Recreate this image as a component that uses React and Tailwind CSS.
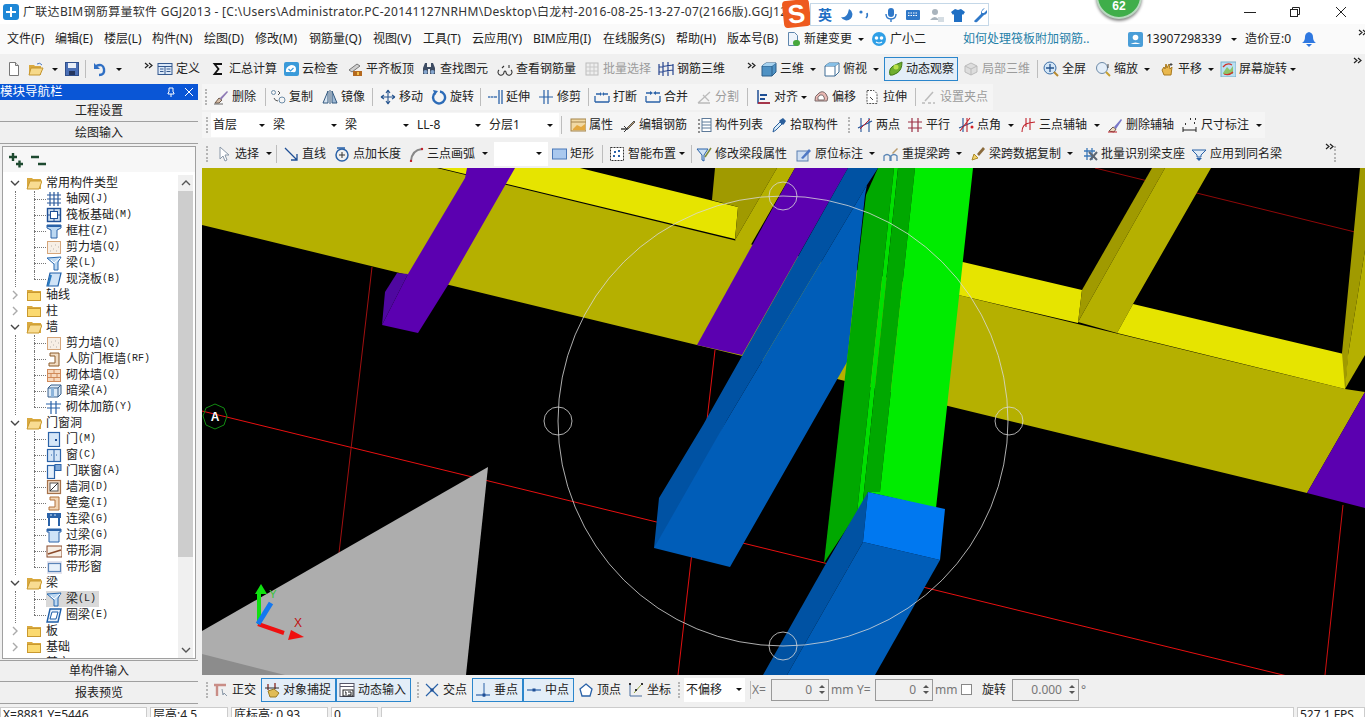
import clsx from 'clsx';

const L = (c, d, w = 1) => <path d={d} fill="none" stroke={c} strokeWidth={w} />;
const F = (c, d) => <path d={d} fill={c} />;

const icons = {
  doc: <><path d="M3.5 1.5h6l3 3v10h-9z" fill="#fff" stroke="#777" /><path d="M9.5 1.5v3h3" fill="#ddd" stroke="#777" /></>,
  open: <><path d="M1 4h5l1 1h6v9H1z" fill="#d9a93f" /><path d="M3 7h12l-3 7H1z" fill="#f6d98a" stroke="#c4952f" /><path d="M9 3q3-2 5 1" fill="none" stroke="#4a78c0" /></>,
  save: <><rect x="1.5" y="1.5" width="13" height="13" fill="#4a6fb5" stroke="#2f4f8c" /><rect x="4" y="2" width="8" height="5" fill="#e8eef8" /><rect x="5" y="10" width="6" height="4" fill="#24365f" /></>,
  undo: <>{L('#2f6fc4', 'M4 5q7-3 8 3t-5 6', 2.4)}{F('#2f6fc4', 'M2 2v6h6z')}</>,
  more: <>{L('#222', 'M5 2l3 2.5L5 7M9 2l3 2.5L9 7', 1.2)}</>,
  define: <><rect x="1" y="2.5" width="14" height="11" fill="#dce9f8" stroke="#34598f" /><path d="M1 5.5h14M8 5.5v8M3 8h3.5M3 10.500h3.500M9.500 8h4M9.500 10.500h4" stroke="#34598f" /></>,
  sigma: <>{L('#111', 'M12 3H4.500l4 5-4 5H12', 1.8)}</>,
  cloud: <><rect x="1" y="1" width="15" height="14" rx="2" fill="#3a9ad9" /><path d="M3 11q-1-5 5-7 5 0 5 4t-3 3z" fill="#fff" />{L('#3a9ad9', 'M5.500 8l2 2 3-3', 1.2)}</>,
  level: <><path d="M2 9l8-6 3 2-8 6z" fill="#cfcfcf" stroke="#777" /><rect x="6" y="10" width="9" height="5" fill="#b4691f" /><rect x="10" y="11" width="2" height="3" fill="#f2c14a" /></>,
  binoc: <><path d="M2 7l2-5h2v4h4V2h2l2 5v6H9V8H7v5H2z" fill="#3d4c63" /><circle cx="4.500" cy="11" r="2" fill="#86a7cf" /><circle cx="11.500" cy="11" r="2" fill="#86a7cf" /></>,
  glasses: <>{L('#333', 'M2 9a3 3 0 1 0 5 2q1-2 2 0a3 3 0 1 0 5-2M7 5L5 7M12 4v3', 1.100)}</>,
  batch: <><rect x="2" y="2" width="12" height="12" fill="#eee" stroke="#bbb" /><path d="M2 6h12M2 10h12M6 2v12M10 2v12" stroke="#c8c8c8" /></>,
  rebar3d: <>{L('#27458f', 'M1 3v11M5 1v14M10 1v14M15 3v11M1 6l14-2M1 11l14-2', 1.200)}</>,
  cube: <><path d="M1 5l4-3h10v9l-4 4H1z" fill="#4f92c4" stroke="#2c5f8a" /><path d="M1 5h10v10M11 5l4-3" fill="none" stroke="#2c5f8a" /><path d="M5 2h10l-4 3H1z" fill="#a7d2ef" /></>,
  cubeTop: <><path d="M1 5l4-3h10v9l-4 4H1z" fill="#fff" stroke="#3e6d95" /><path d="M1 5h10v10M11 5l4-3" fill="none" stroke="#3e6d95" /><path d="M5 2h10l-4 3H1z" fill="#86bfe6" /></>,
  orbit: <><path d="M3 14q-2-7 5-10t7-3q0 8-5 11t-7 2z" fill="#6fae2e" stroke="#3f7a16" /><circle cx="9" cy="6" r="2.500" fill="#b7e04a" /></>,
  local: <><path d="M8 2l6 3v6l-6 3-6-3V5z" fill="#ddd" stroke="#bbb" /><path d="M2 5l6 3 6-3M8 8v6" fill="none" stroke="#bbb" /></>,
  fullscreen: <><circle cx="7" cy="7" r="6" fill="#d3e6f7" stroke="#3c6ea6" /><path d="M7 3v8M3 7h8" stroke="#27558f" strokeWidth="1.300" /><path d="M11 11l4 4" stroke="#b88a2f" strokeWidth="2" /></>,
  zoom: <><circle cx="7" cy="7" r="5.500" fill="#e4eef8" stroke="#6d8aa8" /><path d="M11 11l4 4" stroke="#c7a02f" strokeWidth="2" /><path d="M13 3v4" stroke="#444" /></>,
  pan: <><path d="M3 9l2-3 1 2 1-5 1 4 2-4 1 5 2-2-1 8H5z" fill="#e9b84e" stroke="#a97a1f" /><path d="M12 2v3M10.500 3.500h3" stroke="#444" /></>,
  rotate: <><rect x="1" y="1" width="15" height="15" fill="#b9dff2" stroke="#79afc9" /><path d="M3 12l4-6 3 3 3-4v8H3z" fill="#8fc46a" /><path d="M3 6q4-5 9-2M13 11q-4 4-9 2" fill="none" stroke="#d0342c" strokeWidth="1.300" /></>,
  changeDoc: <><path d="M3.500 1.500h6l3 3v10h-9z" fill="#eef4fb" stroke="#5f86ad" /><rect x="8" y="9" width="7" height="6" rx="3" fill="#47a83c" /></>,
  bot: <><circle cx="8" cy="8" r="7" fill="#2f9fe6" /><circle cx="5.500" cy="7" r="1.800" fill="#fff" /><circle cx="10.500" cy="7" r="1.800" fill="#fff" />{L('#fff', 'M5 11q3 2 6 0', 1.200)}</>,
  user: <><rect x="1" y="1" width="15" height="15" rx="2" fill="#4a9ed8" /><circle cx="8.500" cy="6.500" r="2.800" fill="#fff" /><path d="M3.500 13q5-3 10 0z" fill="#fff" /></>,
  bell: <><path d="M8 1q4 1 4 5 0 4 3 6H1q3-2 3-6t4-5z" fill="#2f78e0" /><path d="M5 13h6l-3 3z" fill="#2f78e0" /></>,
  erase: <><path d="M2 14l4-5 3 2-3 3z" fill="#d8bfa8" stroke="#6d5a4c" /><path d="M7 9l7-7 1 1-7 8z" fill="#8d79b5" /><path d="M1 15h9" stroke="#666" /></>,
  copy: <>{L('#6e8da8', 'M1.500 3.500a2 2 0 1 0 4 0a2 2 0 1 0-4 0M9 11a3 3 0 1 0 6 0a3 3 0 1 0-6 0', 1)}{L('#555', 'M8 2l2 2-2 2M4 9q1 3 4 3', 1)}</>,
  mirror: <><path d="M1 14L6 2v12z" fill="#d6e3f0" stroke="#33597f" /><path d="M15 14L10 2v12z" fill="#9fb9d4" stroke="#33597f" /><path d="M8 1v14" stroke="#33597f" /></>,
  move: <>{L('#27558f', 'M8 1v14M1 8h14M8 1l-2 3M8 1l2 3M8 15l-2-3M8 15l2-3M1 8l3-2M1 8l3 2M15 8l-3-2M15 8l-3 2', 1.100)}</>,
  rot: <>{L('#2d6cb8', 'M4 4a6 6 0 1 0 5-1.500', 2.400)}{F('#2d6cb8', 'M2 1l5 1-3 4z')}</>,
  extend: <>{L('#2a62a8', 'M12 1v14M15 1v14', 1.300)}{L('#2a62a8', 'M1 8h9', 1.300)}{L('#fff', 'M3 8h1M6 8h1', 1)}</>,
  trim: <>{L('#2a62a8', 'M6 1v14M10 1v14M1 8h14', 1.200)}</>,
  breakL: <>{L('#2a62a8', 'M1 13h14M1 7v6M15 7v6M2 5h4M10 5h4', 1.300)}{F('#2a62a8', 'M6 3v4l2-2zM10 3v4L8 5z')}</>,
  merge: <>{L('#2a62a8', 'M1 13h14M1 7v6M15 7v6M1 4h5M10 4h5', 1.300)}{F('#2a62a8', 'M8 4L5 2v4zM8 4l3-2v4z')}</>,
  split: <>{L('#bbb', 'M2 14L14 3M2 14h12M7 6l6 6', 1.300)}</>,
  align: <><path d="M3 1v13h12" fill="none" stroke="#1f4f95" strokeWidth="1.500" /><path d="M3 14h12" stroke="#c0202a" strokeWidth="1.500" /><rect x="5" y="5" width="7" height="2" fill="#1f4f95" /><rect x="5" y="9" width="5" height="2" fill="#1f4f95" /></>,
  offset: <><path d="M2 12q-1-5 4-8 4-3 7 1t1 7z" fill="#e8b7b2" stroke="#7a6a6a" /><path d="M5 11q-1-3 2-5 3-1 4 2t0 3z" fill="#fff" stroke="#7a6a6a" /></>,
  stretch: <><path d="M3 1.500h7l3 3v10H3z" fill="#fff" stroke="#555" strokeDasharray="2 1" /><path d="M6 8l3 3" stroke="#444" /></>,
  grips: <>{L('#bbb', 'M4 12L12 3', 1.500)}{L('#bbb', 'M1 14h3M7 14h3M12 14h2', 1.500)}</>,
  prop: <><rect x="1" y="2" width="15" height="12" fill="#f1d9a3" stroke="#a3834a" /><path d="M1 5h15" stroke="#a3834a" /><path d="M3 12l4-4 4 2 4-3v6H3z" fill="#e3a83f" /></>,
  editbar: <>{L('#333', 'M1 12h7', 1.400)}{L('#333', 'M4 9l3 3-3 3', 1)}<path d="M7 11l7-7 1 1-7 7z" fill="#b99a6b" stroke="#555" /></>,
  list: <>{L('#6e6e6e', 'M2 3h2M2 7h2M2 11h2M2 15h2', 1.600)}<rect x="6" y="1.500" width="9" height="13" fill="#fff" stroke="#5d7a99" /><path d="M6 5h9M6 8h9M6 11h9" stroke="#5d7a99" /></>,
  dropper: <><path d="M2 15l1-4 6-6 2 2-6 6z" fill="#d8ecfa" stroke="#2b5f9c" /><path d="M9 3l3-2 3 3-2 3-1 1-4-4z" fill="#2b5f9c" /></>,
  two: <>{L('#1f4f95', 'M1 11L15 4M4 1v14M12 1v14', 1.100)}<path d="M3 12L13 2" stroke="#c0202a" /></>,
  parallel: <>{L('#9c3045', 'M5 1v14M11 1v14M1 5h14M1 11h14', 1.200)}</>,
  angle: <>{L('#1f4f95', 'M1 11L15 5M5 1v14', 1.100)}{L('#c0202a', 'M2 14L12 1M9 1v14', 1.100)}<circle cx="14" cy="10" r="1.500" fill="#d01c24" /></>,
  threep: <>{L('#c0202a', 'M2 15q0-8 7-9l6-1M6 1v9M10 1v12', 1.100)}</>,
  delaxis: <><path d="M2 14l4-4 3 2-2 3z" fill="#ecd9c0" stroke="#6d5a4c" /><path d="M7 10l7-8 1 1-6 9z" fill="#7a78c8" /><path d="M1 15h9" stroke="#c0202a" /></>,
  dim: <>{L('#222', 'M1 10v5M14 10v5M1 13h13', 1)}{L('#333', 'M8 2h1M13 2h1M3 7h1M12 6h1', 2)}</>,
  cursor: <><path d="M4 1v12l3-3 2 5 2-1-2-5h4z" fill="#fff" stroke="#8a98a8" /></>,
  line: <>{L('#1f4f95', 'M2 2l12 12M14 8v6H8', 1.300)}</>,
  addlen: <><circle cx="8" cy="9" r="6" fill="none" stroke="#2a62a8" strokeWidth="1.500" /><path d="M3 2h8" stroke="#2a62a8" strokeWidth="1.500" /><path d="M8 6v6M5 9h6" stroke="#333" /></>,
  arc: <>{L('#888', 'M3 15Q4 4 14 3', 2)}<circle cx="3" cy="15" r="1.200" fill="#c0202a" /><circle cx="14" cy="3" r="1.200" fill="#c0202a" /></>,
  rect: <><rect x="1.500" y="3" width="14" height="10" fill="#a9c8ee" stroke="#4a78b8" /></>,
  smart: <><rect x="1.500" y="1.500" width="13" height="13" fill="#fff" stroke="#333" strokeDasharray="2 1" /><path d="M5 5h2v2H5zM9 9h2v2H9zM9 4h2v2H9zM4 9h2v2H4z" fill="#2a62a8" /></>,
  funnel: <><path d="M1 3h11L8 9v6l-2-1V9z" fill="#cfe3f5" stroke="#2a62a8" /><path d="M9 11l6-9" stroke="#7c8a3a" strokeWidth="1.500" /></>,
  mark: <><rect x="1" y="5" width="11" height="10" fill="#cfdff2" stroke="#5b7fb0" /><path d="M5 12l8-9 2 2-8 8z" fill="#4e78c4" /></>,
  lift: <>{L('#5b86b5', 'M1 15v-5q3-3 6 0v5M8 15v-5q3-3 6 0v5', 1.300)}<path d="M9 7l5-5 1 1-5 5z" fill="#b99a6b" /></>,
  brush: <><path d="M2 14l2-6 4 4z" fill="#f3d268" stroke="#a98a2a" /><path d="M7 8l6-7 2 2-6 7z" fill="#8a6a3c" /></>,
  recog: <><path d="M2 5h11M2 10h11M5 2v12M10 2v12" stroke="#3b78b8" strokeWidth="1.300" /><path d="M7 6l8 8M15 6l-7 8" stroke="#5b6674" strokeWidth="2" /></>,
  apply: <><path d="M1 4h14l-5 5v2H6V9z" fill="#e1ecf7" stroke="#2a62a8" /><path d="M5 12l3 3 3-3z" fill="#2a62a8" /></>,
  ortho: <>{L('#c98d86', 'M1 3h12M4 3v11', 2.400)}<path d="M9 7l1 6 1-2 3 3" fill="none" stroke="#8a98a8" /></>,
  snap: <><path d="M4 2v6M11 1v6" stroke="#8a2a20" strokeWidth="1.300" /><path d="M1 6h14" stroke="#333" /><path d="M4 9l6-2 5 4-3 4H6z" fill="#e1bc55" stroke="#9a7a22" /></>,
  dyn: <><rect x="1" y="1.500" width="14" height="13" fill="#fff" stroke="#556" /><path d="M1 4.500h14" stroke="#556" /><rect x="4" y="8" width="10" height="6" fill="#fff" stroke="#222" /><path d="M6 10h1v3M9 10h3v3H9" fill="none" stroke="#222" /></>,
  cross: <>{L('#2a62a8', 'M2 2l12 12M14 2L2 14', 1.200)}<rect x="6.500" y="6.500" width="3" height="3" fill="#1f4f95" /></>,
  perp: <>{L('#2a62a8', 'M1 13h14', 1.200)}{L('#2a62a8', 'M9 1v14', 1)}<rect x="7.500" y="11.500" width="3" height="3" fill="#1f4f95" /></>,
  mid: <>{L('#2a62a8', 'M1 8h14', 1.200)}<rect x="6.500" y="6.500" width="3" height="3" fill="#1f4f95" /></>,
  vertex: <><path d="M8 2l6 5-2 7H4L2 7z" fill="#fff" stroke="#2a62a8" strokeWidth="1.300" /></>,
  coord: <>{L('#4a6fa0', 'M2 14h12M2 14V2', 1)}{L('#8fa03a', 'M6 11l7-8', 1)}<path d="M1 1h2v2H1zM13 1h2v2h-2zM7 7h2v2H7z" fill="#333" /></>,
  plusplus: <><path d="M2 5h8M6 1v8" stroke="#1e4a30" strokeWidth="2.400" /><path d="M9 12h7M12.500 8.500v7" stroke="#1e4a30" strokeWidth="2.400" /></>,
  minusminus: <><path d="M1 5h8M8 12h8" stroke="#1e4a30" strokeWidth="2.400" /></>,
  grid: <>{L('#2c5a9c', 'M1 4h14M1 8h14M1 12h14M4 1v14M8 1v14M12 1v14', 1.200)}</>,
  raft: <><rect x="1.500" y="1.500" width="13" height="13" fill="#cfe0f2" stroke="#1f4f95" strokeWidth="1.400" /><rect x="4.500" y="4.500" width="7" height="7" fill="#fff" stroke="#1f4f95" /><path d="M1 8h3M12 8h3M8 1v3M8 12v3" stroke="#1f4f95" /></>,
  column: <><path d="M1 2h14v3l-4 2v8H5V7L1 5z" fill="#bcd8f2" stroke="#2a62a8" /><path d="M1 2h14v2H1z" fill="#2a62a8" /></>,
  wall: <><rect x="1.500" y="2.500" width="13" height="12" fill="#f7efe6" stroke="#d6a67a" /><path d="M4 12h.5M7 10h.5M10 12h.5M12 8h.5M5 7h.5M9 6h.5" stroke="#777" /></>,
  beam: <><path d="M1 3l14-1-3 5v8H8V9z" fill="#bcd8f2" stroke="#2a6ab0" /><path d="M5 5l3 3 6-5" fill="none" stroke="#fff" /></>,
  slab: <><path d="M4 2h11l-3 13H1z" fill="#cfe3f7" stroke="#1f5fa8" strokeWidth="1.200" /><path d="M2 15l3-11" stroke="#2a7ac0" strokeWidth="2" /></>,
  frame: <><path d="M4 2h9v13H3v-3h6V5H4z" fill="#f2ddc4" stroke="#8a5a2a" /></>,
  brick: <><rect x="1.500" y="2.500" width="13" height="12" fill="#f7d9be" stroke="#d08a5a" /><path d="M1 6.500h14M1 10.500h14M8 2.500v4M5 6.500v4M11 6.500v4M8 10.500v4" stroke="#d08a5a" /></>,
  darkbeam: <><path d="M2 5l3-3h10v9l-3 3H2z" fill="#dbe9f6" stroke="#395f8a" /><path d="M2 5h10v9M12 5l3-3" fill="none" stroke="#395f8a" /><rect x="5" y="5" width="3" height="9" fill="#8cb3da" /></>,
  rebarw: <>{L('#2a62a8', 'M0 5h15M5 2v13M10 2v13M1 9h13', 1.200)}</>,
  door: <><rect x="2.500" y="1.500" width="11" height="14" fill="#d5e6f7" stroke="#2a62a8" strokeWidth="1.200" /><rect x="9" y="8" width="2" height="2" fill="#1f4f95" /></>,
  window: <><rect x="1.500" y="2.500" width="13" height="12" fill="#d5e6f7" stroke="#2a62a8" strokeWidth="1.200" /><path d="M8 2.500v12M5 8h1M10 8h1" stroke="#2a62a8" /></>,
  doorwin: <><rect x="1.500" y="2.500" width="7" height="13" fill="#e5f0fb" stroke="#2a62a8" strokeWidth="1.200" /><rect x="9" y="1.500" width="6" height="6" fill="#7fa8d8" stroke="#2a62a8" /></>,
  hole: <><rect x="1.500" y="1.500" width="13" height="13" fill="#f4dcc6" stroke="#a5714a" strokeWidth="1.200" /><rect x="4" y="4" width="8" height="8" fill="#fff" stroke="#555" /><path d="M4 12l8-8" stroke="#333" /></>,
  niche: <><path d="M4 2h9v13H3v-3h6V5H4z" fill="#f2d5b5" stroke="#b0703a" /></>,
  lintel: <><rect x="1" y="2" width="14" height="5" fill="#2a62a8" /><path d="M3 7v8M13 7v8" stroke="#2a62a8" strokeWidth="2" /><path d="M4 4h2M8 4h2" stroke="#cfe3f7" /></>,
  lintel2: <><path d="M1 2h14v3h-2v10H3V5H1z" fill="#cfe3f7" stroke="#2a62a8" /><path d="M1 2h14v2H1z" fill="#2a62a8" /></>,
  stripHole: <><rect x="1" y="3" width="15" height="11" fill="#f7efe6" stroke="#8a4a2a" /><path d="M2 11l13-4" stroke="#8a4a2a" strokeWidth="1.500" /></>,
  stripWin: <><rect x="1" y="2" width="15" height="13" fill="#e4e4ee" /><rect x="2.500" y="4.500" width="12" height="8" fill="#e8f1fb" stroke="#5a84b8" strokeWidth="1.200" /></>,
  ring: <><path d="M4 2h11l-3 13H1z" fill="#e6f0fb" stroke="#1f5fa8" strokeWidth="1.400" /><path d="M6 5h6l-2 7H4z" fill="#fff" stroke="#1f5fa8" /></>,
};

function Ico({ n, className }) {
  return (
    <svg viewBox="0 0 16 16" className={clsx('h-4 w-4 shrink-0', className)}>
      {icons[n]}
    </svg>
  );
}

function Caret({ className }) {
  return <span className={clsx('inline-block h-0 w-0 shrink-0 border-x-[3px] border-t-[3px] border-x-transparent border-t-[#111]', className)} />;
}

function Tool({ n, label, w, caret, dim, on, capCls }) {
  return (
    <div
      className={clsx(
        'flex shrink-0 items-center',
        w,
        on ? 'h-[24px] border border-[#2b86cc] bg-[#e3eef8] pl-[2px]' : 'h-full',
        dim && 'text-[#9c9c9c]'
      )}
    >
      <Ico n={n} />
      {label && <span className="ml-[3px] whitespace-nowrap">{label}</span>}
      {caret && <Caret className={capCls || 'ml-[6px]'} />}
    </div>
  );
}

function Sep({ w }) {
  return (
    <div className={clsx('flex h-full shrink-0 items-center', w)}>
      <span className="h-[18px] w-px bg-[#bdbdbd]" />
    </div>
  );
}

function Grip({ w }) {
  return (
    <div className={clsx('flex h-full shrink-0 items-center', w)}>
      <span className="h-[16px] w-[2px] border-l-2 border-dotted border-[#b5b5b5]" />
    </div>
  );
}

function Row({ items }) {
  return items.map((t, i) =>
    t.sep ? <Sep key={i} w={t.w} /> : t.grip ? <Grip key={i} w={t.w} /> : <Tool key={i} {...t} />
  );
}

function Combo({ label, w }) {
  return (
    <div className={clsx('flex h-[24px] shrink-0 items-center justify-between bg-white pl-[2px] pr-[6px]', w)}>
      <span>{label}</span>
      <Caret />
    </div>
  );
}

const menus = [
  ['文件(F)', 'w-[48px]'], ['编辑(E)', 'w-[49px]'], ['楼层(L)', 'w-[48px]'], ['构件(N)', 'w-[52px]'],
  ['绘图(D)', 'w-[51px]'], ['修改(M)', 'w-[54px]'], ['钢筋量(Q)', 'w-[64px]'], ['视图(V)', 'w-[50px]'],
  ['工具(T)', 'w-[49px]'], ['云应用(Y)', 'w-[61px]'], ['BIM应用(I)', 'w-[70px]'], ['在线服务(S)', 'w-[73px]'],
  ['帮助(H)', 'w-[51px]'], ['版本号(B)', 'w-[61px]'],
];

const row1 = [
  { n: 'doc', w: 'w-[22px]' },
  { n: 'open', w: 'w-[36px]', caret: true, capCls: 'ml-[8px]' },
  { n: 'save', w: 'w-[21px]' },
  { sep: true, w: 'w-[7px]' },
  { n: 'undo', w: 'w-[48px]', caret: true, capCls: 'ml-[8px]' },
  { n: 'more', w: 'w-[17px]' },
  { n: 'define', label: '定义', w: 'w-[53px]' },
  { n: 'sigma', label: '汇总计算', w: 'w-[73px]' },
  { n: 'cloud', label: '云检查', w: 'w-[64px]' },
  { n: 'level', label: '平齐板顶', w: 'w-[74px]' },
  { n: 'binoc', label: '查找图元', w: 'w-[76px]' },
  { n: 'glasses', label: '查看钢筋量', w: 'w-[87px]' },
  { n: 'batch', label: '批量选择', w: 'w-[74px]', dim: true },
  { n: 'rebar3d', label: '钢筋三维', w: 'w-[85px]' },
  { n: 'more', w: 'w-[18px]' },
  { n: 'cube', label: '三维', w: 'w-[63px]', caret: true },
  { n: 'cubeTop', label: '俯视', w: 'w-[60px]', caret: true },
  { n: 'orbit', label: '动态观察', w: 'w-[74px]', on: true },
  { sep: false, n: 'local', label: '局部三维', w: 'w-[74px] ml-[5px]', dim: true },
  { sep: true, w: 'w-[6px]' },
  { n: 'fullscreen', label: '全屏', w: 'w-[52px]' },
  { n: 'zoom', label: '缩放', w: 'w-[64px]', caret: true },
  { n: 'pan', label: '平移', w: 'w-[61px]', caret: true },
  { n: 'rotate', label: '屏幕旋转', w: 'w-[82px]', caret: true, capCls: 'ml-[3px]' },
];

const row2 = [
  { n: 'erase', label: '删除', w: 'w-[52px]' },
  { sep: true, w: 'w-[5px]' },
  { n: 'copy', label: '复制', w: 'w-[52px]' },
  { n: 'mirror', label: '镜像', w: 'w-[50px]' },
  { sep: true, w: 'w-[8px]' },
  { n: 'move', label: '移动', w: 'w-[51px]' },
  { n: 'rot', label: '旋转', w: 'w-[49px]' },
  { sep: true, w: 'w-[7px]' },
  { n: 'extend', label: '延伸', w: 'w-[51px]' },
  { n: 'trim', label: '修剪', w: 'w-[50px]' },
  { sep: true, w: 'w-[6px]' },
  { n: 'breakL', label: '打断', w: 'w-[51px]' },
  { n: 'merge', label: '合并', w: 'w-[51px]' },
  { n: 'split', label: '分割', w: 'w-[51px]', dim: true },
  { sep: true, w: 'w-[8px]' },
  { n: 'align', label: '对齐', w: 'w-[58px]', caret: true, capCls: 'ml-[3px]' },
  { n: 'offset', label: '偏移', w: 'w-[51px]' },
  { n: 'stretch', label: '拉伸', w: 'w-[51px]' },
  { sep: true, w: 'w-[6px]' },
  { n: 'grips', label: '设置夹点', w: 'w-[72px]', dim: true },
];

const row3 = [
  { n: 'prop', label: '属性', w: 'w-[50px]' },
  { n: 'editbar', label: '编辑钢筋', w: 'w-[76px]' },
  { n: 'list', label: '构件列表', w: 'w-[75px]' },
  { n: 'dropper', label: '拾取构件', w: 'w-[77px]' },
  { grip: true, w: 'w-[9px]' },
  { n: 'two', label: '两点', w: 'w-[50px]' },
  { n: 'parallel', label: '平行', w: 'w-[51px]' },
  { n: 'angle', label: '点角', w: 'w-[62px]', caret: true, capCls: 'ml-[7px]' },
  { n: 'threep', label: '三点辅轴', w: 'w-[87px]', caret: true, capCls: 'ml-[7px]' },
  { n: 'delaxis', label: '删除辅轴', w: 'w-[75px]' },
  { n: 'dim', label: '尺寸标注', w: 'w-[85px]', caret: true, capCls: 'ml-[7px]' },
];

const row4a = [
  { n: 'cursor', label: '选择', w: 'w-[60px]', caret: true, capCls: 'ml-[7px]' },
  { sep: true, w: 'w-[7px]' },
  { n: 'line', label: '直线', w: 'w-[51px]' },
  { n: 'addlen', label: '点加长度', w: 'w-[74px]' },
  { n: 'arc', label: '三点画弧', w: 'w-[86px]', caret: true, capCls: 'ml-[7px]' },
];

const row4b = [
  { n: 'rect', label: '矩形', w: 'w-[51px]' },
  { sep: true, w: 'w-[7px]' },
  { n: 'smart', label: '智能布置', w: 'w-[82px]', caret: true, capCls: 'ml-[3px]' },
  { sep: true, w: 'w-[5px]' },
  { n: 'funnel', label: '修改梁段属性', w: 'w-[100px]' },
  { n: 'mark', label: '原位标注', w: 'w-[87px]', caret: true },
  { n: 'lift', label: '重提梁跨', w: 'w-[87px]', caret: true },
  { n: 'brush', label: '梁跨数据复制', w: 'w-[112px]', caret: true },
  { n: 'recog', label: '批量识别梁支座', w: 'w-[109px]' },
  { n: 'apply', label: '应用到同名梁', w: 'w-[130px]' },
];

const bottomA = [
  { n: 'cross', label: '交点', w: 'w-[48px]' },
  { n: 'perp', label: '垂点', w: 'w-[51px]', on: true },
  { n: 'mid', label: '中点', w: 'w-[51px]', on: true },
  { n: 'vertex', label: '顶点', w: 'w-[50px] ml-[4px]' },
  { n: 'coord', label: '坐标', w: 'w-[50px]' },
];

const tree = [
  { t: '常用构件类型', open: true },
  { t: '轴网', k: '(J)', n: 'grid' }, { t: '筏板基础', k: '(M)', n: 'raft' }, { t: '框柱', k: '(Z)', n: 'column' },
  { t: '剪力墙', k: '(Q)', n: 'wall' }, { t: '梁', k: '(L)', n: 'beam' }, { t: '现浇板', k: '(B)', n: 'slab', last: true },
  { t: '轴线' }, { t: '柱' }, { t: '墙', open: true },
  { t: '剪力墙', k: '(Q)', n: 'wall' }, { t: '人防门框墙', k: '(RF)', n: 'frame' }, { t: '砌体墙', k: '(Q)', n: 'brick' },
  { t: '暗梁', k: '(A)', n: 'darkbeam' }, { t: '砌体加筋', k: '(Y)', n: 'rebarw', last: true },
  { t: '门窗洞', open: true },
  { t: '门', k: '(M)', n: 'door' }, { t: '窗', k: '(C)', n: 'window' }, { t: '门联窗', k: '(A)', n: 'doorwin' },
  { t: '墙洞', k: '(D)', n: 'hole' }, { t: '壁龛', k: '(I)', n: 'niche' }, { t: '连梁', k: '(G)', n: 'lintel' },
  { t: '过梁', k: '(G)', n: 'lintel2' }, { t: '带形洞', n: 'stripHole' }, { t: '带形窗', n: 'stripWin', last: true },
  { t: '梁', open: true },
  { t: '梁', k: '(L)', n: 'beam', sel: true }, { t: '圈梁', k: '(E)', n: 'ring', last: true },
  { t: '板' }, { t: '基础' }, { t: '其它' },
];

function Folder({ open }) {
  return (
    <svg viewBox="0 0 16 16" className="h-4 w-4 shrink-0">
      <path d="M1 3h5l1 1h8v10H1z" fill="#d9a93f" />
      {open ? <path d="M4 6h12l-3 8H1z" fill="#f8dc92" stroke="#c9992f" /> : <rect x="1.500" y="5.500" width="13" height="8" fill="#fbd96f" stroke="#c9992f" />}
    </svg>
  );
}

function TreeRow({ row }) {
  const child = !!row.n;
  return (
    <div className="relative flex h-4 items-center">
      <span className="absolute left-[12px] top-0 h-4 border-l border-dotted border-[#777]" />
      {child ? (
        <>
          <span className={clsx('absolute left-[31px] top-0 border-l border-dotted border-[#777]', row.last ? 'h-2' : 'h-4')} />
          <span className="absolute left-[31px] top-2 w-[12px] border-t border-dotted border-[#777]" />
          <div className={clsx('relative ml-[43px] flex h-4 items-center pr-[3px]', row.sel && 'bg-[#d9d9d9]')}>
            <Ico n={row.n} />
            <span className="ml-[4px] whitespace-nowrap">{row.t}</span>
            {row.k && <span className="font-['Liberation_Mono',monospace] text-[10px]">{row.k}</span>}
          </div>
        </>
      ) : (
        <>
          <span className="absolute left-[17px] top-2 w-[6px] border-t border-dotted border-[#777]" />
          <div className="relative ml-[7px] flex h-4 w-[16px] items-center bg-white">
            <svg viewBox="0 0 10 10" className="h-[10px] w-[10px]">
              {row.open ? <path d="M1 3l4 4 4-4" fill="none" stroke="#444" strokeWidth="1.400" /> : <path d="M3 1l4 4-4 4" fill="none" stroke="#aaa" strokeWidth="1.400" />}
            </svg>
          </div>
          <Folder open={row.open} />
          <span className="ml-[4px] whitespace-nowrap">{row.t}</span>
        </>
      )}
    </div>
  );
}

function Poly({ c, p }) {
  return <polygon fill={c} points={p} />;
}

function Canvas() {
  return (
    <svg viewBox="202 168 1163 507" className="block h-[507px] w-[1163px] shrink-0 bg-black">
      <g fill="none" strokeWidth="1">
        <path d="M202 411L1365 695" stroke="#e81010" />
        <path d="M372 267L339 553" stroke="#a01010" />
        <path d="M715 350L678 675" stroke="#e01010" />
        <path d="M1343 505L1325 675" stroke="#d01010" />
        <path d="M1095 168L1355 232" stroke="#900808" />
      </g>
      <Poly c="#adadad" p="488,467 202,631 202,675 466,675" />
      <Poly c="#8c8c8c" p="202,654 285,675 202,675" />
      <Poly c="#b5b000" p="202,168 437,168 1345,389 1365,392 1307,493 202,225" />
      <Poly c="#e6e400" p="440,168 580,168 738,207 735,239" />
      <Poly c="#a09a00" p="715,168 777,168 735,240 738,207 712,200" />
      <Poly c="#b5b000" p="777,168 795,168 745,255 735,240" />
      <Poly c="#e6e400" p="950,259 1082,290 1078,323 950,293" />
      <Poly c="#a09a00" p="1152,168 1165,168 1078,322 1082,290" />
      <Poly c="#b5b000" p="1165,168 1211,168 1133,304 1117,333 1078,322" />
      <Poly c="#e6e400" p="1133,304 1348,355 1345,389 1117,333" />
      <Poly c="#a09a00" p="1360,168 1365,168 1365,250 1348,355 1345,389 1342,353" />
      <Poly c="#b5b000" p="1365,250 1348,355 1345,389 1365,355" />
      <Poly c="#5b00b0" p="1365,392 1307,493 1365,508" />
      <Poly c="#5b00b0" p="467,168 515,168 448,285 418,333 382,325 408,274 465,178" />
      <Poly c="#4f08a0" p="385,292 397,273 408,274 382,325" />
      <Poly c="#5b00b0" p="795,168 848,168 742,355 697,345" />
      <Poly c="#0052a3" p="848,168 878,168 867,185 727,420 663,545 654,548 659,498 703,425" />
      <Poly c="#005db8" p="867,185 865,195 847,362 730,567 654,548 727,420" />
      <Poly c="#00a800" p="878,168 894,168 857,513 824,563 840,420 866,195" />
      <Poly c="#00e000" p="894,168 898,168 871,425 862,510 857,513" />
      <Poly c="#00a800" p="898,168 915,168 880,492 868,492 862,510" />
      <Poly c="#00ec00" p="915,168 973,168 936,508 868,492 880,492" />
      <Poly c="#0052a3" p="868,492 863,542 787,675 763,675 824,567" />
      <Poly c="#005db8" p="863,542 940,560 875,675 787,675" />
      <Poly c="#0078f0" p="868,492 945,509 940,560 863,542" />
      <g fill="none" stroke="#d8d8d8" strokeOpacity="0.8">
        <circle cx="783" cy="421" r="225" />
        <circle cx="783" cy="196" r="14" />
        <circle cx="558" cy="421" r="14" />
        <circle cx="1009" cy="421" r="14" />
        <circle cx="783" cy="646" r="14" />
      </g>
      <polygon points="215,404 224,408 227,416 224,425 215,429 206,425 203,416 206,408" fill="none" stroke="#128a12" />
      <text x="215" y="421" textAnchor="middle" fill="#fff" className="font-['Liberation_Sans',sans-serif] text-[12px] font-bold">A</text>
      <path d="M258 624L284 633" stroke="#f01010" strokeWidth="4" />
      <polygon points="304,637 291,630 288,640" fill="#f01010" />
      <path d="M259 624V594" stroke="#10e010" strokeWidth="4" />
      <polygon points="261,584 255,594 267,594" fill="#10e010" />
      <path d="M258 624L271 603" stroke="#1478f0" strokeWidth="5" />
      <text x="298" y="627" textAnchor="middle" fill="#c01010" className="font-['Liberation_Sans',sans-serif] text-[12px]">X</text>
      <text x="273" y="598" textAnchor="middle" fill="#3bc43b" className="font-['Liberation_Sans',sans-serif] text-[11px]">Y</text>
    </svg>
  );
}

function Stepper({ w, value }) {
  return (
    <div className={clsx('flex h-[22px] shrink-0 items-center border border-[#999] bg-[#f0f0f0] text-[#777]', w)}>
      <span className="flex-1 pr-[4px] text-right">{value}</span>
      <div className="flex h-full w-[12px] flex-col items-center justify-around py-[4px]">
        <span className="h-0 w-0 border-x-[3px] border-b-[3px] border-x-transparent border-b-[#555]" />
        <span className="h-0 w-0 border-x-[3px] border-t-[3px] border-x-transparent border-t-[#555]" />
      </div>
    </div>
  );
}

function ImeBar() {
  return (
    <>
      <div className="absolute left-[783px] top-0 flex h-[27px] w-[27px] -rotate-6 items-center justify-center rounded-[4px] bg-[#ee5a1f]">
        <span className="font-['Liberation_Sans',sans-serif] text-[26px] font-bold leading-none text-white">S</span>
      </div>
      <div className="absolute left-[810px] top-[3px] flex h-[23px] w-[179px] items-center border border-[#c5d8e8] bg-white pl-[7px] text-[#1f6fc4]">
        <span className="text-[14px] font-bold">英</span>
        <svg viewBox="0 0 16 16" className="ml-[7px] h-4 w-4"><path d="M10 2a6 6 0 1 1-8 8q6 2 8-8z" fill="#2f78c8" /></svg>
        <svg viewBox="0 0 16 16" className="ml-[1px] h-4 w-4"><circle cx="5" cy="5" r="1.600" fill="#2f78c8" /><path d="M11 6q1 3-1 5" fill="none" stroke="#2f78c8" strokeWidth="1.600" /></svg>
        <svg viewBox="0 0 16 16" className="ml-[11px] h-4 w-4"><rect x="5" y="1" width="6" height="9" rx="3" fill="#2f78c8" /><path d="M3 7q0 5 5 5t5-5M8 12v3" fill="none" stroke="#2f78c8" strokeWidth="1.400" /></svg>
        <svg viewBox="0 0 16 16" className="ml-[6px] h-4 w-4"><rect x="1" y="3" width="14" height="10" rx="1" fill="#2f78c8" /><path d="M3 6h10M3 8.500h10" stroke="#fff" strokeDasharray="1.500 1" /></svg>
        <svg viewBox="0 0 16 16" className="ml-[7px] h-4 w-4"><circle cx="7" cy="5" r="3" fill="#a9b4bd" /><path d="M2 13q5-6 9 0z" fill="#a9b4bd" /><rect x="10" y="10" width="6" height="5" fill="#d5dde3" /></svg>
        <svg viewBox="0 0 16 16" className="ml-[6px] h-4 w-4"><path d="M5 2l3 1 3-1 4 3-2 3-1-1v8H4V7L3 8 1 5z" fill="#1f6fc4" /></svg>
        <svg viewBox="0 0 16 16" className="ml-[5px] h-4 w-4"><path d="M14 1l-3 3v2h2l3-3q1 4-3 5l-1 1-6 6q-2 1-3-1l6-6 1-1q0-5 4-6z" fill="#2f78c8" /></svg>
      </div>
      <div className="absolute left-[1096px] top-[-27px] flex h-[46px] w-[46px] items-end justify-center rounded-full border-2 border-[#b9d9c0] bg-[#3fae4a] pb-[5px] font-['Liberation_Sans',sans-serif] text-[12px] font-bold leading-none text-white shadow-[0_2px_3px_#888]">
        62
      </div>
    </>
  );
}

export default function App() {
  return (
    <div className="relative flex h-[717px] w-[1365px] flex-col overflow-hidden bg-[#f0f0f0] font-['Noto_Sans','Noto_Sans_CJK_SC',sans-serif] text-[12px] leading-none text-[#222]">
      {/* title bar */}
      <div className="flex h-[24px] shrink-0 items-center bg-white">
        <svg viewBox="0 0 16 16" className="ml-[3px] h-4 w-4 shrink-0">
          <rect width="16" height="16" rx="3" fill="#1e87d6" />
          <path d="M8 3v10M3 8h10" stroke="#fff" strokeWidth="2" />
        </svg>
        <span className="ml-[4px] w-[761px] overflow-hidden whitespace-nowrap tracking-[0.3px] text-[#333]">
          广联达BIM钢筋算量软件 GGJ2013 - [C:\Users\Administrator.PC-20141127NRHM\Desktop\白龙村-2016-08-25-13-27-07(2166版).GGJ12
        </span>
        <div className="ml-auto flex items-center">
          <span className="h-px w-[12px] bg-[#222]" />
          <svg viewBox="0 0 12 12" className="ml-[33px] h-[12px] w-[12px]"><path d="M3.500 3V1.500h7v7H9" fill="none" stroke="#222" /><rect x="1.500" y="3.500" width="7" height="7" fill="none" stroke="#222" /></svg>
          <svg viewBox="0 0 12 12" className="ml-[34px] mr-[18px] h-[12px] w-[12px]"><path d="M1 1l10 10M11 1L1 11" stroke="#222" /></svg>
        </div>
      </div>

      {/* menu bar */}
      <div className="flex h-[30px] shrink-0 items-center bg-[#fafafa] pl-[7px]">
        {menus.map(([m, w]) => (
          <span key={m} className={clsx('shrink-0 whitespace-nowrap', w)}>{m}</span>
        ))}
        <Tool n="changeDoc" label="新建变更" w="w-[86px] ml-[-3px]" caret />
        <Tool n="bot" label="广小二" w="w-[92px]" />
        <span className="w-[164px] shrink-0 whitespace-nowrap text-[#1f7fa8]">如何处理筏板附加钢筋..</span>
        <Tool n="user" label="13907298339" w="w-[118px]" caret capCls="ml-[9px]" />
        <span className="w-[56px] shrink-0 whitespace-nowrap">造价豆:0</span>
        <Ico n="bell" />
        <Ico n="more" className="ml-[37px] self-start mt-[4px]" />
      </div>

      {/* main toolbar */}
      <div className="flex h-[30px] shrink-0 items-center pl-[6px]">
        <Row items={row1} />
        <Ico n="more" className="ml-auto mr-[-8px] self-start mt-[2px]" />
        <span className="w-[8px]" />
      </div>

      <div className="flex min-h-0 flex-1">
        {/* module navigator */}
        <aside className="flex w-[202px] shrink-0 pr-[4px]">
          <div className="flex w-[198px] flex-col">
            <div className="flex h-[16px] shrink-0 items-center justify-between bg-[#0a56d6] pr-[4px] text-[12.500px] text-white">
              <span>模块导航栏</span>
              <div className="flex items-center gap-[8px]">
                <svg viewBox="0 0 10 10" className="h-[10px] w-[10px]"><path d="M3 1h4v4l1 1v1H2V6l1-1zM5 7v3" fill="none" stroke="#fff" /></svg>
                <svg viewBox="0 0 10 10" className="h-[10px] w-[10px]"><path d="M1 1l8 8M9 1L1 9" stroke="#fff" /></svg>
              </div>
            </div>
            <div className="flex h-[22px] shrink-0 items-center justify-center border-b border-[#a0a0a0] bg-[#f0f0f0]">工程设置</div>
            <div className="flex h-[22px] shrink-0 items-center justify-center border-b border-[#a0a0a0] bg-[#f0f0f0]">绘图输入</div>
            <div className="mx-[2px] mt-[2px] flex min-h-0 flex-1 flex-col overflow-hidden border border-[#a0a0a0] bg-white">
              <div className="flex h-[25px] shrink-0 items-center gap-[7px] bg-[#f7f7f7] pl-[4px]">
                <Ico n="plusplus" />
                <Ico n="minusminus" />
              </div>
              <div className="mt-[3px] flex min-h-0 flex-1">
                <div className="min-w-0 flex-1 overflow-hidden">
                  {tree.map((row, i) => <TreeRow key={i} row={row} />)}
                </div>
                <div className="mr-[2px] flex w-[15px] shrink-0 flex-col bg-[#f0f0f0]">
                  <div className="flex h-4 items-center justify-center">
                    <svg viewBox="0 0 10 10" className="h-[10px] w-[10px]"><path d="M1 7l4-4 4 4" fill="none" stroke="#555" strokeWidth="1.400" /></svg>
                  </div>
                  <div className="h-[366px] bg-[#cdcdcd]" />
                  <div className="flex-1" />
                  <div className="flex h-4 items-center justify-center">
                    <svg viewBox="0 0 10 10" className="h-[10px] w-[10px]"><path d="M1 3l4 4 4-4" fill="none" stroke="#555" strokeWidth="1.400" /></svg>
                  </div>
                </div>
              </div>
            </div>
            <div className="mt-[1px] flex h-[22px] shrink-0 items-center justify-center border-y border-[#a0a0a0]">单构件输入</div>
            <div className="flex h-[22px] shrink-0 items-center justify-center border-b border-[#a0a0a0]">报表预览</div>
          </div>
        </aside>

        <main className="flex min-w-0 flex-1 flex-col">
          <div className="flex h-[26px] shrink-0">
            <div className="flex h-full w-[791px] items-center bg-[#f5f5f5] pl-[3px]">
              <Grip w="w-[8px]" />
              <Row items={row2} />
            </div>
          </div>
          <div className="flex h-[29px] shrink-0 pt-[2px]">
            <div className="flex h-[26px] w-[1063px] items-center bg-[#f5f5f5] pl-[4px]">
              <Grip w="w-[5px]" />
              <Combo label="首层" w="w-[60px]" />
              <Combo label="梁" w="w-[72px]" />
              <Combo label="梁" w="w-[72px]" />
              <Combo label="LL-8" w="w-[72px]" />
              <Combo label="分层1" w="w-[72px]" />
              <Sep w="w-[9px] ml-[2px]" />
              <Row items={row3} />
            </div>
          </div>
          <div className="flex h-[29px] shrink-0 items-center pl-[4px]">
            <Grip w="w-[10px]" />
            <Row items={row4a} />
            <Combo label="" w="w-[54px]" />
            <span className="w-[3px]" />
            <Row items={row4b} />
            <Ico n="more" className="self-start mt-[3px]" />
            <Grip w="w-[9px] ml-[-3px]" />
          </div>

          <Canvas />

          <div className="flex h-[29px] shrink-0 items-center pl-[4px]">
            <Grip w="w-[7px]" />
            <Tool n="ortho" label="正交" w="w-[48px]" />
            <Tool n="snap" label="对象捕捉" w="w-[75px]" on />
            <Tool n="dyn" label="动态输入" w="w-[75px]" on />
            <span className="w-[6px]" />
            <Grip w="w-[7px]" />
            <Row items={bottomA} />
            <Grip w="w-[6px]" />
            <div className="flex h-[24px] w-[61px] shrink-0 items-center justify-between bg-white pl-[2px] pr-[3px]">
              <span>不偏移</span>
              <Caret />
            </div>
            <Sep w="w-[7px] ml-[5px] -mr-[5px]" />
            <span className="w-[19px] shrink-0 text-[#777]">X=</span>
            <Stepper w="w-[58px]" value="0" />
            <span className="ml-[2px] w-[26px] shrink-0 text-[#777]">mm</span>
            <span className="w-[18px] shrink-0 text-[#777]">Y=</span>
            <Stepper w="w-[58px]" value="0" />
            <span className="ml-[2px] w-[26px] shrink-0 text-[#777]">mm</span>
            <span className="mr-[2px] h-[11px] w-[11px] shrink-0 border border-[#888] bg-white" />
            <span className="ml-[8px] w-[30px] shrink-0">旋转</span>
            <Stepper w="w-[67px]" value="0.000" />
            <span className="ml-[2px] text-[#777]">°</span>
          </div>
        </main>
      </div>

      {/* status bar, cut off by the window edge */}
      <div className="flex h-[13px] shrink-0 items-start gap-[3px] bg-[#f0f0f0] pt-[3px] text-[#222]">
        <div className="h-[20px] w-[147px] border border-[#ccc] bg-white pl-[2px] pt-[1px]">X=8881 Y=5446</div>
        <div className="h-[20px] w-[78px] border border-[#ccc] bg-white pl-[2px] pt-[1px]">层高:4.5</div>
        <div className="h-[20px] w-[97px] border border-[#ccc] bg-white pl-[2px] pt-[1px]">底标高: 0.93</div>
        <div className="h-[20px] w-[47px] border border-[#ccc] bg-white pl-[2px] pt-[1px]">0</div>
        <div className="h-[20px] flex-1 border border-[#ccc] bg-white" />
        <div className="h-[20px] w-[68px] border border-[#ccc] bg-white pl-[2px] pt-[1px]">527.1 FPS</div>
      </div>

      <ImeBar />
    </div>
  );
}
